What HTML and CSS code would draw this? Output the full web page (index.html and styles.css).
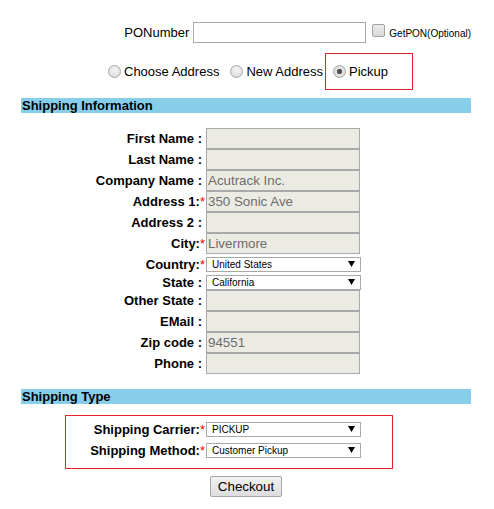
FILE: index.html
```html
<!DOCTYPE html>
<html>
<head>
<meta charset="utf-8">
<title>Shipping</title>
<link rel="stylesheet" href="styles.css">
</head>
<body>
<div class="page">
  <div class="po-row">
    <label class="po-label" for="po">PONumber</label>
    <input id="po" class="po-input" type="text">
    <span class="check"></span>
    <span class="get-pon">GetPON(Optional)</span>
  </div>

  <div class="radio-row">
    <span class="radio"></span><span class="radio-text">Choose Address</span>
    <span class="radio second"></span><span class="radio-text">New Address</span>
    <div class="pickup-box">
      <span class="radio checked"></span><span class="radio-text">Pickup</span>
    </div>
  </div>

  <div class="section-head">Shipping Information</div>

  <div class="form">
    <div class="lbl plain">First Name :</div><div class="field"></div>
    <div class="lbl plain">Last Name :</div><div class="field"></div>
    <div class="lbl plain">Company Name :</div><div class="field">Acutrack Inc.</div>
    <div class="lbl">Address 1:<span class="req">*</span></div><div class="field">350 Sonic Ave</div>
    <div class="lbl plain">Address 2 :</div><div class="field"></div>
    <div class="lbl">City:<span class="req">*</span></div><div class="field">Livermore</div>
    <div class="lbl">Country:<span class="req">*</span></div>
    <div class="select country"><span>United States</span><svg class="arrow" width="7" height="6" viewBox="0 0 7 6"><polygon points="0,0 7,0 3.5,6" fill="#000"/></svg></div>
    <div class="lbl plain">State :</div>
    <div class="select state"><span>California</span><svg class="arrow" width="7" height="6" viewBox="0 0 7 6"><polygon points="0,0 7,0 3.5,6" fill="#000"/></svg></div>
    <div class="lbl plain">Other State :</div><div class="field"></div>
    <div class="lbl plain">EMail :</div><div class="field"></div>
    <div class="lbl plain">Zip code :</div><div class="field">94551</div>
    <div class="lbl plain">Phone :</div><div class="field"></div>
  </div>

  <div class="section-head type-head">Shipping Type</div>

  <div class="type-box">
    <div class="lbl">Shipping Carrier:<span class="req">*</span></div>
    <div class="select ship"><span>PICKUP</span><svg class="arrow" width="7" height="6" viewBox="0 0 7 6"><polygon points="0,0 7,0 3.5,6" fill="#000"/></svg></div>
    <div class="lbl">Shipping Method:<span class="req">*</span></div>
    <div class="select ship"><span>Customer Pickup</span><svg class="arrow" width="7" height="6" viewBox="0 0 7 6"><polygon points="0,0 7,0 3.5,6" fill="#000"/></svg></div>
  </div>

  <div class="actions">
    <button class="checkout" type="button">Checkout</button>
  </div>
</div>
</body>
</html>
```

FILE: styles.css
```css
html, body {
  margin: 0;
  padding: 0;
  background: #fff;
}

body {
  font-family: "Liberation Sans", Arial, sans-serif;
  font-size: 13px;
  color: #000;
}

.page {
  width: 450px;
  margin-left: 21px;
  padding-top: 22px;
}

/* PO number row */
.po-row {
  display: flex;
  justify-content: flex-end;
  align-items: center;
  height: 21px;
}

.po-label {
  margin-right: 4px;
  font-size: 13px;
}

.po-input {
  box-sizing: border-box;
  width: 173px;
  height: 21px;
  margin: 0;
  padding: 1px 2px;
  border: 1px solid #a9a9a9;
  background: #fff;
  font: 13px "Liberation Sans", Arial, sans-serif;
}

.check {
  box-sizing: border-box;
  width: 13px;
  height: 13px;
  margin: 0 4px 4px 6px;
  border: 1px solid #a2a2a2;
  border-radius: 2px;
  background: linear-gradient(#eaeaea, #d9d9d9);
}

.get-pon {
  font-size: 10px;
  margin-top: 2px;
}

/* radio row */
.radio-row {
  display: flex;
  align-items: center;
  margin-top: 10px;
  height: 37px;
  padding-left: 87px;
}

.radio {
  box-sizing: border-box;
  width: 13px;
  height: 13px;
  border: 1px solid #a8a8a8;
  border-radius: 50%;
  background: radial-gradient(circle at 50% 35%, #f4f4f4, #d8d8d8);
  margin-right: 3px;
  flex: none;
}

.radio.second {
  margin-left: 11px;
}

.radio.checked {
  background: radial-gradient(circle, #505050 0, #555 2.3px, #e6e6e6 3px, #d8d8d8 6px);
}

.radio-text {
  font-size: 13px;
  white-space: nowrap;
}

.pickup-box {
  box-sizing: border-box;
  display: flex;
  align-items: center;
  width: 88px;
  height: 37px;
  margin-left: 2px;
  padding-left: 7px;
  border: 1px solid #e3242b;
}

/* section headers */
.section-head {
  margin-top: 8px;
  height: 15px;
  line-height: 15px;
  padding-left: 1px;
  background: #87ceeb;
  font-weight: bold;
  font-size: 13px;
}

.type-head {
  margin-top: 15px;
}

/* address form */
.form {
  display: grid;
  grid-template-columns: 185px 155px;
  margin-top: 15px;
  align-items: center;
}

.lbl {
  text-align: right;
  font-weight: bold;
  white-space: nowrap;
  padding-right: 1px;
}

.lbl.plain {
  padding-right: 4px;
}

.req {
  color: #f00;
  font-weight: normal;
}

.field {
  box-sizing: border-box;
  width: 154px;
  height: 21px;
  line-height: 19px;
  padding-left: 1px;
  border: 1px solid #a9a9a9;
  background: #ebebe4;
  color: #6d6d6d;
  font-size: 13.33px;
  white-space: nowrap;
  overflow: hidden;
}

.select {
  position: relative;
  box-sizing: border-box;
  display: flex;
  align-items: center;
  width: 155px;
  height: 15px;
  padding-left: 5px;
  border: 1px solid #a9a9a9;
  background: #fff;
  font-size: 10px;
  color: #000;
}

.select .arrow {
  position: absolute;
  right: 5px;
  top: 3px;
}

.select.country {
  margin: 3px 0;
}

.select.state {
  margin: 0;
}

/* shipping type box */
.type-box {
  box-sizing: border-box;
  display: grid;
  grid-template-columns: 140px 155px;
  grid-auto-rows: 21px;
  align-items: center;
  width: 328px;
  margin: 11px 0 0 44px;
  padding: 3px 0 7px;
  border: 1px solid #e3242b;
}

/* checkout */
.actions {
  display: flex;
  justify-content: center;
  margin-top: 7px;
}

.checkout {
  box-sizing: border-box;
  width: 72px;
  height: 21px;
  padding: 0;
  border: 1px solid #a6a6a6;
  border-radius: 2px;
  background: linear-gradient(#f2f2f2, #dddddd);
  font: 13.33px "Liberation Sans", Arial, sans-serif;
  color: #000;
}
```
